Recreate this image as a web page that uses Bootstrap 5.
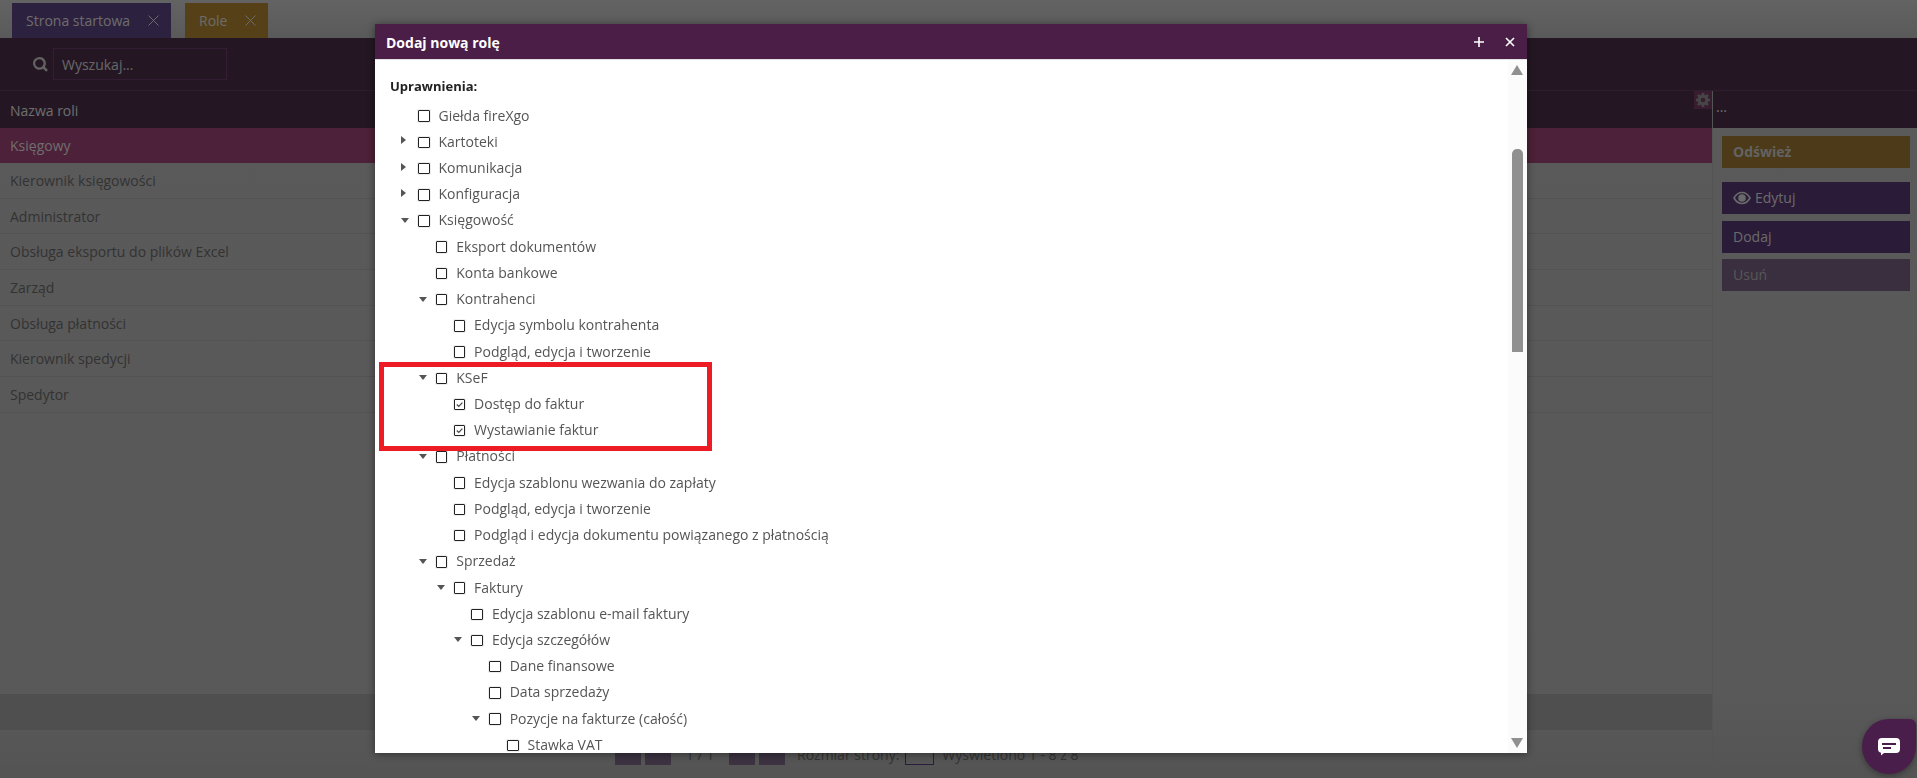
<!doctype html>
<html lang="pl">
<head>
<meta charset="utf-8">
<title>Role</title>
<link href="https://cdn.jsdelivr.net/npm/bootstrap@5.3.0/dist/css/bootstrap.min.css" rel="stylesheet">
<style>
html,body{height:778px;overflow:hidden}
body{font-family:"Open Sans","Liberation Sans",sans-serif;font-size:14px;background:linear-gradient(#c6c6c6 0,#b4b4b4 38px,#b2b2b2 700px,#a8a8a8 778px);color:#666}
.tabbar{height:38px;padding-left:12px;gap:14px}
.tabitem{height:35px;padding:0 12px 0 14px;gap:18px;color:#d8d8d8}
.tabitem svg{width:11px;height:11px;stroke:#d8d8d8;stroke-width:1;fill:none}
.tab-purple{background:#5a4380}
.tab-gold{background:#ab812e}
.topband{height:53px;background:#482e46;border-bottom:1px solid #5c3c5a;padding-left:33px;gap:5px}
.topband svg{width:15px;height:15px;fill:#c4c4c4}
.searchfield{width:174px;height:32px;background:transparent;border:1px solid #683a68;border-radius:0;color:#ccc;font-size:14px;padding:0 8px}
.searchfield::placeholder{color:#cfcfcf;opacity:1}
.leftcol{width:1712px;height:687px}
.rightcol{width:205px;border-left:1px solid #a8a8a8}
.headcell{height:37px;background:#482e46;color:#dcdcdc}
.headlabel{padding:1px 0 0 10px}
.gearbox{width:18px;height:18px;background:#703a5c}
.gearbox svg{width:14px;height:14px;fill:#8c8c8c}
.headdots{font-size:14px;line-height:1;padding:9px 0 0 3px;color:#dcdcdc}
.roletable{height:566px;margin:0}
.rolerow{height:35.7px;padding-left:10px;border-bottom:1px solid #a6a6a6;color:#666}
.rolerow.picked{background:#9a4272;color:#dcdcdc;border-bottom:0;height:35px}
.sumband{height:36px;background:#9e9e9e}
.pager{height:48px;padding:0 0 13px 615px;gap:4px;color:#666}
.pgsq{width:26px;height:30px;background:#786482}
.pgnum{width:50px;text-align:center}
.pgsize{width:29px;height:30px;border:1px solid #56367a;text-align:center;margin:0 4px 0 2px}
.sidebtn{display:block;width:188px;height:32px;margin-left:9px;padding:0 0 0 11px;border:0;border-radius:0;font-size:14px;text-align:left;line-height:32px}
.sb-gold{background:#987430;color:#c6c6c6;font-weight:700;margin-top:8px;margin-bottom:14px}
.sb-purple{background:#543670;color:#d4d4d4;margin-bottom:7px}
.sb-off{background:#745f7c;color:#aeaeae;margin-bottom:0;margin-top:-1px}
.sidebtn svg{width:18px;height:14px;margin-right:4px;fill:none;stroke:#d4d4d4;stroke-width:1.6;vertical-align:-2px}
.modal-dialog.role-dialog{max-width:none;width:1152px;margin:24px 0 0 375px}
.role-sheet{height:729px;border:0;border-radius:0;box-shadow:0 1px 8px rgba(0,0,0,.45);overflow:hidden}
.role-head{height:36px;background:#4a1e46;color:#fff;padding:1px 12px 0 11px;border-bottom:1px solid #e2e2e2;border-radius:0;font-weight:700}
.role-head svg{width:10px;height:10px;stroke:#fff;stroke-width:1.6}
.hicons{gap:21px}
.role-body{padding:17px 0 0 15px;position:relative;overflow:hidden;height:693px;color:#555}
.permtitle{font-weight:700;font-size:13px;color:#222;line-height:19px;margin-bottom:6px}
.treeline{height:26.220px;margin-left:-5px}
.treeline label{margin-left:9px;white-space:nowrap}
.lv0{padding-left:16px}.lv1{padding-left:33.800px}.lv2{padding-left:51.600px}.lv3{padding-left:69.400px}.lv4{padding-left:87.200px}.lv5{padding-left:105px}
.twist{width:17px;flex:none;height:10px;position:relative}
.tw-r::before{content:"";position:absolute;left:0;top:0;border-left:5px solid #555;border-top:4.500px solid transparent;border-bottom:4.500px solid transparent}
.tw-d::before{content:"";position:absolute;left:0;top:3px;border-top:5px solid #555;border-left:4px solid transparent;border-right:4px solid transparent}
.form-check-input.treebox{width:11.500px;height:11.500px;margin:2px 0 0;flex:none;border:1.200px solid #222;border-radius:1px;box-shadow:0 0 0 1px #eee}
.form-check-input.treebox:checked{background-color:#fff;background-size:9px 9px;background-image:url("data:image/svg+xml,%3csvg xmlns='http://www.w3.org/2000/svg' viewBox='0 0 10 10'%3e%3cpath fill='none' stroke='%23444' stroke-width='1.3' d='M2 5l2.200 2.200L8.200 3'/%3e%3c/svg%3e")}
.scrolltrack{position:absolute;right:0;top:0;bottom:0;width:19px;background:#fbfbfb}
.scrollthumb{position:absolute;left:4px;top:89px;width:11px;height:203px;background:#909090;border-radius:5px 5px 0 0}
.scrollup{position:absolute;left:3px;top:5px;border-bottom:10px solid #909090;border-left:6.500px solid transparent;border-right:6.500px solid transparent}
.scrolldown{position:absolute;left:3px;bottom:5px;border-top:10px solid #909090;border-left:6.500px solid transparent;border-right:6.500px solid transparent}
.redmark{position:absolute;left:4px;top:338px;width:333px;height:89px;border:5px solid #ed1c24;pointer-events:none}
.chatbubble{position:fixed;z-index:1060;right:1px;bottom:4px;width:54px;height:55px;background:#4a1e4a;border-radius:50% 6px 50% 50%;box-shadow:0 2px 6px rgba(0,0,0,.35)}
.chatbubble svg{width:24px;height:19px}
</style>
</head>
<body>
<div class="d-flex align-items-end tabbar">
  <div class="d-flex align-items-center tabitem tab-purple"><span>Strona startowa</span><svg viewBox="0 0 11 11"><path d="M.5.5l10 10M10.500.5l-10 10"/></svg></div>
  <div class="d-flex align-items-center tabitem tab-gold"><span>Role</span><svg viewBox="0 0 11 11"><path d="M.5.5l10 10M10.500.5l-10 10"/></svg></div>
</div>
<div class="d-flex align-items-center topband">
  <svg viewBox="0 0 16 16"><path d="M6.800 0a6.800 6.800 0 1 0 3.900 12.400l3.300 3.300 1.900-1.900-3.300-3.300A6.800 6.800 0 0 0 6.800 0zm0 2.400a4.400 4.400 0 1 1 0 8.800 4.400 4.400 0 0 1 0-8.800z"/></svg>
  <input class="form-control searchfield" placeholder="Wyszukaj...">
</div>
<div class="d-flex">
  <div class="leftcol d-flex flex-column">
    <div class="headcell d-flex justify-content-between">
      <span class="headlabel align-self-center">Nazwa roli</span>
      <span class="gearbox d-flex align-items-center justify-content-center"><svg viewBox="0 0 16 16"><path d="M6.700 0h2.600l.4 2.200 1.300.5 1.800-1.300 1.800 1.800-1.300 1.800.5 1.300 2.200.4v2.600l-2.200.4-.5 1.300 1.300 1.800-1.800 1.800-1.800-1.300-1.300.5-.4 2.200H6.700l-.4-2.200-1.300-.5-1.800 1.300-1.800-1.800 1.300-1.800-.5-1.300L0 9.300V6.700l2.200-.4.5-1.300-1.300-1.800 1.800-1.800 1.800 1.300 1.300-.5zM8 5.300a2.700 2.700 0 1 0 0 5.400 2.700 2.700 0 0 0 0-5.400z"/></svg></span>
    </div>
    <div class="roletable">
      <div class="rolerow picked d-flex align-items-center">Księgowy</div>
      <div class="rolerow d-flex align-items-center">Kierownik księgowości</div>
      <div class="rolerow d-flex align-items-center">Administrator</div>
      <div class="rolerow d-flex align-items-center">Obsługa eksportu do plików Excel</div>
      <div class="rolerow d-flex align-items-center">Zarząd</div>
      <div class="rolerow d-flex align-items-center">Obsługa płatności</div>
      <div class="rolerow d-flex align-items-center">Kierownik spedycji</div>
      <div class="rolerow d-flex align-items-center">Spedytor</div>
    </div>
    <div class="sumband"></div>
    <div class="pager d-flex align-items-end">
      <span class="pgsq"></span><span class="pgsq"></span>
      <span class="pgnum">1 / 1</span>
      <span class="pgsq"></span><span class="pgsq"></span>
      <span class="ms-2">Rozmiar strony:</span>
      <span class="pgsize">25</span>
      <span>Wyświetlono 1 - 8 z 8</span>
    </div>
  </div>
  <div class="rightcol">
    <div class="headcell headdots">...</div>
    <button class="btn sidebtn sb-gold" type="button">Odśwież</button>
    <button class="btn sidebtn sb-purple" type="button"><svg viewBox="0 0 18 14"><path d="M1 7c2-3.500 5-5.500 8-5.500S15 3.500 17 7c-2 3.500-5 5.500-8 5.500S3 10.500 1 7z"/><circle cx="9" cy="7" r="3" fill="#d4d4d4"/></svg>Edytuj</button>
    <button class="btn sidebtn sb-purple" type="button">Dodaj</button>
    <button class="btn sidebtn sb-off" type="button">Usuń</button>
  </div>
</div>

<div class="modal-backdrop show"></div>
<div class="modal d-block">
  <div class="modal-dialog role-dialog">
    <div class="modal-content role-sheet">
      <div class="modal-header role-head d-flex justify-content-between align-items-center">
        <span>Dodaj nową rolę</span>
        <span class="d-flex hicons"><svg viewBox="0 0 10 10"><path d="M5 0v10M0 5h10"/></svg><svg viewBox="0 0 10 10"><path d="M1 1l8 8M9 1l-8 8"/></svg></span>
      </div>
      <div class="modal-body role-body">
        <div class="permtitle">Uprawnienia:</div>
        <div class="d-flex align-items-center treeline lv0"><span class="twist"></span><input class="form-check-input treebox" type="checkbox"><label>Giełda fireXgo</label></div>
        <div class="d-flex align-items-center treeline lv0"><span class="twist tw-r"></span><input class="form-check-input treebox" type="checkbox"><label>Kartoteki</label></div>
        <div class="d-flex align-items-center treeline lv0"><span class="twist tw-r"></span><input class="form-check-input treebox" type="checkbox"><label>Komunikacja</label></div>
        <div class="d-flex align-items-center treeline lv0"><span class="twist tw-r"></span><input class="form-check-input treebox" type="checkbox"><label>Konfiguracja</label></div>
        <div class="d-flex align-items-center treeline lv0"><span class="twist tw-d"></span><input class="form-check-input treebox" type="checkbox"><label>Księgowość</label></div>
        <div class="d-flex align-items-center treeline lv1"><span class="twist"></span><input class="form-check-input treebox" type="checkbox"><label>Eksport dokumentów</label></div>
        <div class="d-flex align-items-center treeline lv1"><span class="twist"></span><input class="form-check-input treebox" type="checkbox"><label>Konta bankowe</label></div>
        <div class="d-flex align-items-center treeline lv1"><span class="twist tw-d"></span><input class="form-check-input treebox" type="checkbox"><label>Kontrahenci</label></div>
        <div class="d-flex align-items-center treeline lv2"><span class="twist"></span><input class="form-check-input treebox" type="checkbox"><label>Edycja symbolu kontrahenta</label></div>
        <div class="d-flex align-items-center treeline lv2"><span class="twist"></span><input class="form-check-input treebox" type="checkbox"><label>Podgląd, edycja i tworzenie</label></div>
        <div class="d-flex align-items-center treeline lv1"><span class="twist tw-d"></span><input class="form-check-input treebox" type="checkbox"><label>KSeF</label></div>
        <div class="d-flex align-items-center treeline lv2"><span class="twist"></span><input class="form-check-input treebox" type="checkbox" checked><label>Dostęp do faktur</label></div>
        <div class="d-flex align-items-center treeline lv2"><span class="twist"></span><input class="form-check-input treebox" type="checkbox" checked><label>Wystawianie faktur</label></div>
        <div class="d-flex align-items-center treeline lv1"><span class="twist tw-d"></span><input class="form-check-input treebox" type="checkbox"><label>Płatności</label></div>
        <div class="d-flex align-items-center treeline lv2"><span class="twist"></span><input class="form-check-input treebox" type="checkbox"><label>Edycja szablonu wezwania do zapłaty</label></div>
        <div class="d-flex align-items-center treeline lv2"><span class="twist"></span><input class="form-check-input treebox" type="checkbox"><label>Podgląd, edycja i tworzenie</label></div>
        <div class="d-flex align-items-center treeline lv2"><span class="twist"></span><input class="form-check-input treebox" type="checkbox"><label>Podgląd i edycja dokumentu powiązanego z płatnością</label></div>
        <div class="d-flex align-items-center treeline lv1"><span class="twist tw-d"></span><input class="form-check-input treebox" type="checkbox"><label>Sprzedaż</label></div>
        <div class="d-flex align-items-center treeline lv2"><span class="twist tw-d"></span><input class="form-check-input treebox" type="checkbox"><label>Faktury</label></div>
        <div class="d-flex align-items-center treeline lv3"><span class="twist"></span><input class="form-check-input treebox" type="checkbox"><label>Edycja szablonu e-mail faktury</label></div>
        <div class="d-flex align-items-center treeline lv3"><span class="twist tw-d"></span><input class="form-check-input treebox" type="checkbox"><label>Edycja szczegółów</label></div>
        <div class="d-flex align-items-center treeline lv4"><span class="twist"></span><input class="form-check-input treebox" type="checkbox"><label>Dane finansowe</label></div>
        <div class="d-flex align-items-center treeline lv4"><span class="twist"></span><input class="form-check-input treebox" type="checkbox"><label>Data sprzedaży</label></div>
        <div class="d-flex align-items-center treeline lv4"><span class="twist tw-d"></span><input class="form-check-input treebox" type="checkbox"><label>Pozycje na fakturze (całość)</label></div>
        <div class="d-flex align-items-center treeline lv5"><span class="twist"></span><input class="form-check-input treebox" type="checkbox"><label>Stawka VAT</label></div>
        <div class="scrolltrack"><span class="scrollup"></span><span class="scrollthumb"></span><span class="scrolldown"></span></div>
      </div>
      <div class="redmark"></div>
    </div>
  </div>
</div>
<div class="chatbubble d-flex align-items-center justify-content-center">
  <svg viewBox="0 0 24 19"><path fill="#fff" d="M5 1h14a4 4 0 0 1 4 4v7a4 4 0 0 1-4 4H7l-3 2.500V15.800A4 4 0 0 1 1 12V5a4 4 0 0 1 4-4z"/><path stroke="#4a1e4a" stroke-width="2" d="M5 7h14M6 11h8"/></svg>
</div>
<script src="https://cdn.jsdelivr.net/npm/bootstrap@5.3.0/dist/js/bootstrap.bundle.min.js"></script>
</body>
</html>
